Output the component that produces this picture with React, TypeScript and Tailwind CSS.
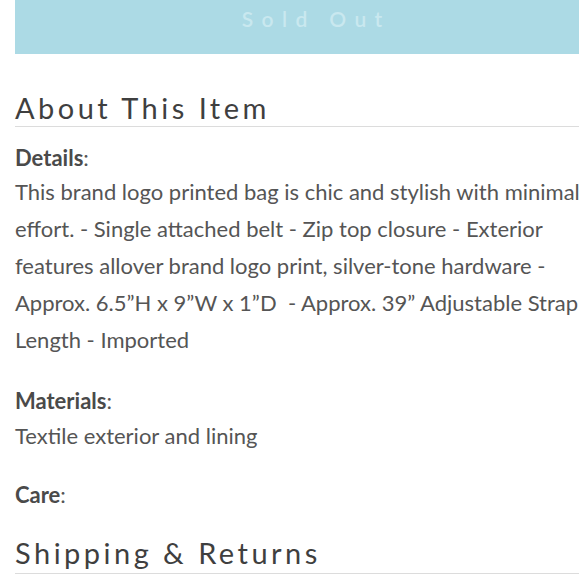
import React from "react";

const body = { fontFamily: "Lato, 'Open Sans', sans-serif" };

export default function App() {
  const details = [
    "This brand logo printed bag is chic and stylish with minimal",
    "effort. - Single attached belt - Zip top closure - Exterior",
    "features allover brand logo print, silver-tone hardware -",
    "Approx. 6.5\u201DH x 9\u201DW x 1\u201DD\u00A0 - Approx. 39\u201D Adjustable Strap",
    "Length - Imported",
  ];
  return (
    <div className="w-[579px] h-[580px] overflow-hidden bg-white">
      <div className="w-[594px] ml-[15px]">
        <div className="h-[54px] bg-[#acdae5] flex items-center justify-center">
          <span
            className="text-[21px] font-semibold tracking-[0.4em] text-[#c9e8ef] pb-[17px] pl-[0.4em]"
            style={{ fontFamily: "Lato, sans-serif" }}
          >
            Sold Out
          </span>
        </div>
        <h2
          className="mt-[37px] text-[29px] leading-[34px] tracking-[0.12em] text-[#3f3f3f] pb-[1px] border-b border-[#dcdcdc]"
          style={{ fontFamily: "Lato, sans-serif" }}
        >
          About This Item
        </h2>
        <div className="text-[22px] leading-[37px] text-[#555]" style={body}>
          <div className="mt-[16px] leading-[30px]">
            <span className="font-bold text-[#4a4a4a]">Details</span>:
          </div>
          {details.map((l, i) => (
            <div key={i} className="whitespace-nowrap">
              {l}
            </div>
          ))}
          <div className="mt-[27px] leading-[32px]">
            <span className="font-bold text-[#4a4a4a]">Materials</span>:
          </div>
          <div>Textile exterior and lining</div>
          <div className="mt-[25px] leading-[32px]">
            <span className="font-bold text-[#4a4a4a]">Care</span>:
          </div>
        </div>
        <h2
          className="mt-[25px] text-[29px] leading-[34px] tracking-[0.12em] text-[#3f3f3f] pb-[3px] border-b border-[#dcdcdc]"
          style={{ fontFamily: "Lato, sans-serif" }}
        >
          Shipping &amp; Returns
        </h2>
      </div>
    </div>
  );
}
